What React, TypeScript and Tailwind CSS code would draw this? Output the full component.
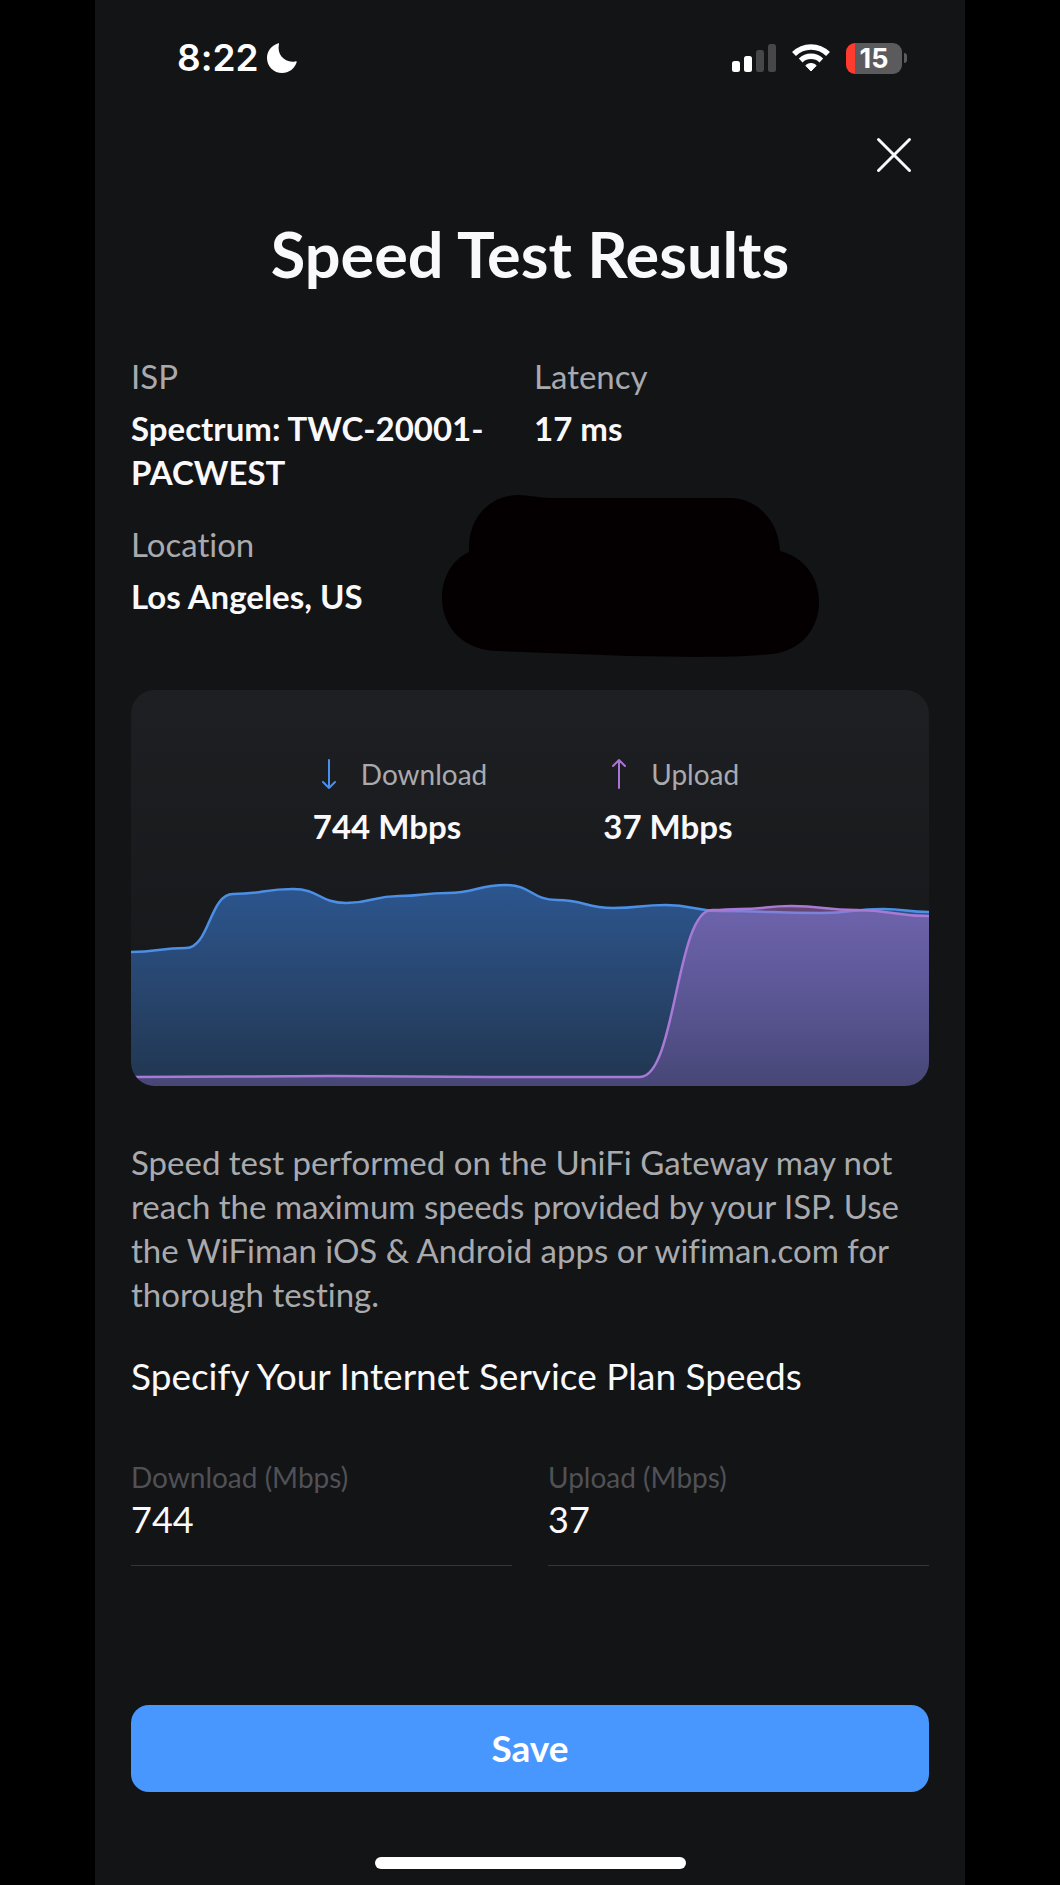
import { useState } from 'react';

type Point = [number, number];

const downloadPoints: Point[] = [
  [0, 262], [55, 258], [102, 204], [162, 199], [215, 213], [268, 206],
  [316, 203], [375, 195], [426, 210], [482, 218], [535, 215], [590, 221],
  [690, 223], [752, 219], [798, 222],
];

const uploadPoints: Point[] = [
  [0, 387], [200, 386], [360, 387], [509, 387], [581, 220], [609, 219],
  [660, 216], [725, 220], [798, 226],
];

// Eases between samples, flat at each one
function smoothLine(points: Point[]) {
  let d = `M${points[0][0]} ${points[0][1]}`;
  for (let i = 1; i < points.length; i++) {
    const [x0, y0] = points[i - 1];
    const [x1, y1] = points[i];
    const mid = (x0 + x1) / 2;
    d += ` C${mid} ${y0} ${mid} ${y1} ${x1} ${y1}`;
  }
  return d;
}

function StatusBar() {
  return (
    <div className="flex items-center justify-between pt-9 pb-10 pl-[82px] pr-[58px] font-['Inter',sans-serif] text-white">
      <div className="flex h-11 items-center gap-2">
        <span className="text-[37px] leading-[44px] font-semibold">8:22</span>
        <svg width="30" height="30" viewBox="0 0 30 30" fill="currentColor" aria-hidden="true">
          <path d="M10.800 0.500C11.800 0.100 12.200 0.500 11.900 1.500C9.800 11.500 17.600 20.200 28.200 18.400C29.400 18.200 30 18.700 29.500 19.800C27.100 26 21.900 30 15.200 30C6.800 30 0 23.300 0 14.900C0 8.200 4.300 2.800 10.800 0.500Z" />
        </svg>
      </div>
      <div className="flex h-11 items-center gap-4">
        <svg width="44" height="30" viewBox="0 0 44 30" aria-hidden="true">
          <rect x="0" y="18" width="8" height="11" rx="2.500" fill="#fff" />
          <rect x="12" y="13" width="8" height="16" rx="2.500" fill="#fff" />
          <rect x="24" y="7" width="8" height="22" rx="2.500" fill="#474749" />
          <rect x="36" y="1" width="8" height="28" rx="2.500" fill="#474749" />
        </svg>
        <svg width="38" height="30" viewBox="0 0 38 30" aria-hidden="true">
          <g fill="none" stroke="#fff" strokeWidth="5.500">
            <path d="M2 11C11.500 1.600 26.500 1.600 36 11" />
            <path d="M8.700 17.400C14.500 12 23.500 12 29.300 17.400" />
          </g>
          <path d="M19 28L13.800 22.600C16.500 19.800 21.500 19.800 24.200 22.600Z" fill="#fff" stroke="#fff" strokeLinejoin="round" />
        </svg>
        <div className="flex items-center gap-0.5">
          <div className="flex h-[31px] w-14 items-center justify-center rounded-[9px] bg-linear-to-r from-[#ff3b30] from-[9px] to-[#5b5b5d] to-[9px] text-[27px] leading-none font-bold">
            15
          </div>
          <div className="h-2.5 w-[3px] rounded-r-full bg-[#5b5b5d]" />
        </div>
      </div>
    </div>
  );
}

function Detail({ label, value }: { label: string; value: string }) {
  return (
    <div>
      <dt className="text-[#a9aaae]">{label}</dt>
      <dd className="mt-2 font-bold text-[#f9f9fb]">{value}</dd>
    </div>
  );
}

function Speed({ label, value, direction }: { label: string; value: string; direction: 'down' | 'up' }) {
  return (
    <div>
      <div className="flex items-center gap-4">
        <svg width="32" height="32" viewBox="0 0 32 32" fill="none" strokeWidth="2" strokeLinecap="round" strokeLinejoin="round" aria-hidden="true">
          {direction === 'down' ? (
            <path d="M16 2V30M10 24L16 30L22 24" stroke="#4a8fee" />
          ) : (
            <path d="M16 30V2M10 8L16 2L22 8" stroke="#a874d6" />
          )}
        </svg>
        <span className="text-[28px] leading-9 text-[#a9aaae]">{label}</span>
      </div>
      <p className="mt-3 font-bold text-[#f9f9fb]">{value}</p>
    </div>
  );
}

function SpeedChart() {
  const download = smoothLine(downloadPoints);
  const upload = smoothLine(uploadPoints);

  return (
    <svg className="mt-8 block h-[206px] w-full" viewBox="0 190 798 206" preserveAspectRatio="none" role="img" aria-label="Download and upload speed over time">
      <defs>
        <linearGradient id="download" x1="0" y1="194" x2="0" y2="396" gradientUnits="userSpaceOnUse">
          <stop offset="0" stopColor="#2c568f" />
          <stop offset="0.500" stopColor="#28466f" />
          <stop offset="1" stopColor="#213650" />
        </linearGradient>
        <linearGradient id="upload" x1="0" y1="216" x2="0" y2="396" gradientUnits="userSpaceOnUse">
          <stop offset="0" stopColor="#b074d0" stopOpacity="0.500" />
          <stop offset="1" stopColor="#a870d8" stopOpacity="0.280" />
        </linearGradient>
      </defs>
      <path d={`${download} V396 H0 Z`} fill="url(#download)" />
      <path d={download} fill="none" stroke="#4c8fe6" strokeWidth="2.500" />
      <path d={`${upload} V396 H0 Z`} fill="url(#upload)" />
      <path d={upload} fill="none" stroke="#a87ad6" strokeWidth="2.500" />
    </svg>
  );
}

function SpeedField({ id, label, value, onChange }: { id: string; label: string; value: string; onChange: (value: string) => void }) {
  return (
    <div className="border-b border-[#35363a] pb-6">
      <label htmlFor={id} className="block text-[28px] leading-9 text-[#505156]">
        {label}
      </label>
      <input
        id={id}
        type="text"
        inputMode="numeric"
        value={value}
        onChange={(e) => onChange(e.target.value)}
        className="mt-0.5 block h-11 w-full bg-transparent text-[36px] leading-[44px] text-[#f9f9fb] outline-none"
      />
    </div>
  );
}

export default function App() {
  const [download, setDownload] = useState('744');
  const [upload, setUpload] = useState('37');

  return (
    <div className="min-h-screen bg-black font-['Lato',sans-serif] text-[33px] leading-[44px] [font-variant-ligatures:none]">
      <main className="mx-auto flex min-h-screen w-full max-w-[870px] flex-col bg-[#131416]">
        <StatusBar />

        <div className="flex grow flex-col px-9">
          <button type="button" aria-label="Close" className="flex size-[70px] items-center justify-center self-end">
            <svg width="36" height="36" viewBox="0 0 36 36" stroke="#f9f9fb" strokeWidth="3" strokeLinecap="round">
              <path d="M2.500 2.500L33.500 33.500M33.500 2.500L2.500 33.500" />
            </svg>
          </button>

          <h1 className="mt-7 text-center text-[63px] leading-[72px] font-bold text-[#f9f9fb]">
            Speed Test Results
          </h1>

          {/* Connection details */}
          <dl className="relative mt-16 grid grid-cols-2 gap-x-2 gap-y-7">
            <Detail label="ISP" value="Spectrum: TWC-20001-PACWEST" />
            <Detail label="Latency" value="17 ms" />
            <Detail label="Location" value="Los Angeles, US" />
            <svg className="absolute top-[139px] left-[310px]" width="380" height="165" viewBox="441 493 380 165" aria-hidden="true">
              <path
                d="M469 552C467 519 489 495 518 495C530 495 538 498 552 498H730C758 498 779 522 780 551C804 557 819 577 819 602C819 630 800 651 772 654C735 658 680 657 630 656L498 651C466 651 442 629 442 598C442 577 453 559 469 552Z"
                fill="#040002"
              />
            </svg>
          </dl>

          {/* Results chart */}
          <section className="mt-[72px] overflow-hidden rounded-3xl bg-linear-to-b from-[#1e1f22] to-[#151618] pt-[66px]">
            <div className="flex justify-center gap-[116px] pr-2">
              <Speed label="Download" value="744 Mbps" direction="down" />
              <Speed label="Upload" value="37 Mbps" direction="up" />
            </div>
            <SpeedChart />
          </section>

          <p className="mt-[54px] text-[#a9aaae]">
            Speed test performed on the UniFi Gateway may not reach the maximum speeds provided by your ISP. Use the WiFiman iOS &amp; Android apps or wifiman.com for thorough testing.
          </p>

          {/* Plan speeds */}
          <h2 className="mt-[38px] text-[37px] text-[#f9f9fb]">Specify Your Internet Service Plan Speeds</h2>
          <div className="mt-[61px] grid grid-cols-2 gap-9">
            <SpeedField id="plan-download" label="Download (Mbps)" value={download} onChange={setDownload} />
            <SpeedField id="plan-upload" label="Upload (Mbps)" value={upload} onChange={setUpload} />
          </div>

          <button type="button" className="mt-auto h-[87px] rounded-[18px] bg-[#4797ff] pb-0.5 text-[37px] font-bold text-white">
            Save
          </button>
        </div>

        <div className="mx-auto mt-[65px] mb-4 h-3 w-[311px] rounded-full bg-white" />
      </main>
    </div>
  );
}
